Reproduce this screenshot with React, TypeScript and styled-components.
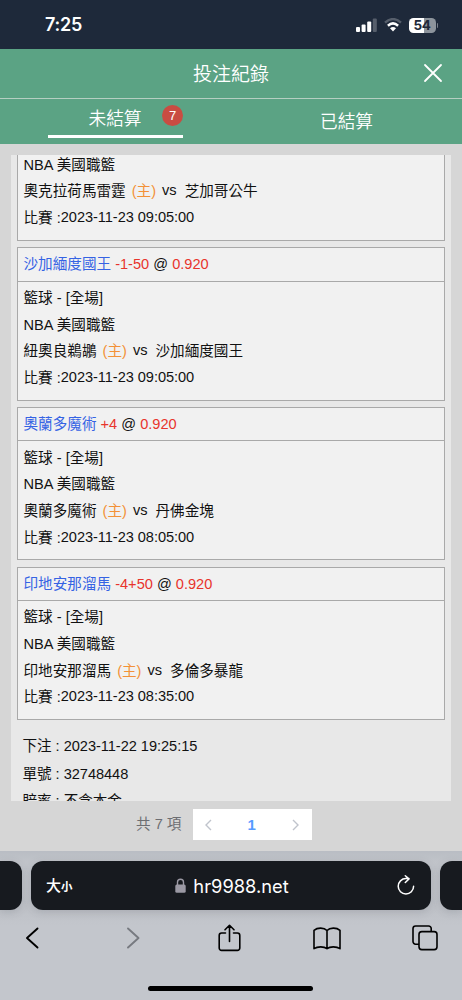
import React from 'react';
import styled, { createGlobalStyle } from 'styled-components';

const Global = createGlobalStyle`
  * { box-sizing: border-box; }
  body { margin: 0; background: #d6d6d6; }
`;

const Screen = styled.div`
  width: 462px;
  height: 1000px;
  overflow: hidden;
  display: flex;
  flex-direction: column;
  background: #d6d6d6;
  font-family: 'Liberation Sans', 'Noto Sans CJK TC', sans-serif;
  font-size: 14.6px;
  color: #111;
`;

const StatusBar = styled.div`
  flex: none;
  height: 49px;
  background: #1e293a;
  color: #fff;
  display: flex;
  align-items: center;
  justify-content: space-between;
  padding: 1px 24px 0 45px;
`;

const Clock = styled.span`
  font: 600 18px/22px Inter, sans-serif;
  letter-spacing: -0.2px;
`;

const StatusIcons = styled.div`
  display: flex;
  align-items: center;
  gap: 7px;
  svg { display: block; }
`;

const Battery = styled.div`
  display: flex;
  align-items: center;
  gap: 1px;
`;

const BatteryBody = styled.div`
  width: 27px;
  height: 15px;
  border-radius: 4.5px;
  background: linear-gradient(90deg, #fff 54%, #8d949c 54%);
  color: #1e293a;
  font: 700 13.5px/15px Inter, sans-serif;
  letter-spacing: -0.5px;
  text-align: center;
`;

const BatteryTip = styled.div`
  width: 1.5px;
  height: 5px;
  border-radius: 0 2px 2px 0;
  background: #7b828c;
`;

const Header = styled.div`
  flex: none;
  height: 50px;
  background: #5ba384;
  border-bottom: 1px solid #b5cfc2;
  display: grid;
  grid-template-columns: 60px 1fr 60px;
  align-items: center;
  color: #fff;
`;

const Title = styled.div`
  grid-column: 2;
  text-align: center;
  font-size: 19px;
  font-weight: 350;
  line-height: 28px;
  padding-top: 3px;
`;

const CloseButton = styled.button`
  border: 0;
  padding: 0 19px 2px 0;
  background: none;
  display: flex;
  justify-content: flex-end;
  color: #fff;
`;

const Tabs = styled.div`
  flex: none;
  height: 45px;
  display: flex;
  background: #5ba384;
  color: #fff;
  font-size: 17.7px;
  font-weight: 350;
`;

const Tab = styled.div`
  flex: 1;
  display: flex;
  justify-content: center;
  padding-top: 10px;
  line-height: 26px;
`;

const ActiveLabel = styled.div`
  position: relative;
  width: 135px;
  height: 39px;
  margin-top: -10px;
  padding: 7px 1px 0 0;
  border-bottom: 3px solid #fff;
  text-align: center;
`;

const Count = styled.span`
  position: absolute;
  right: 0;
  top: 6px;
  width: 21px;
  height: 21px;
  border-radius: 50%;
  background: #c94c42;
  font-size: 13px;
  font-weight: 400;
  line-height: 21px;
`;

const Panel = styled.main`
  flex: none;
  height: 646px;
  margin: 11px 11px 0;
  padding: 0 6px;
  background: #e8e8e8;
  overflow: hidden;
`;

const Card = styled.section<{ $cut?: boolean }>`
  height: ${p => (p.$cut ? '89.6px' : '153.4px')};
  margin-top: ${p => (p.$cut ? '-3.3px' : '6.2px')};
  border: 1px solid #a9a9a9;
  border-top-width: ${p => (p.$cut ? 0 : '1px')};
  background: #f1f1f1;
`;

const Pick = styled.div`
  height: 33.4px;
  line-height: 33.4px;
  padding-left: 5.5px;
  border-bottom: 1px solid #a9a9a9;
  margin-bottom: 3.4px;
  white-space: pre;
`;

const Tone = styled.span<{ $c: string }>`
  color: ${p => p.$c};
`;

const Host1 = styled(Tone)`
  margin-left: 2px;
`;

const Line = styled.div`
  display: flex;
  height: 26.6px;
  line-height: 27px;
  padding-left: 5.5px;
  white-space: pre;
`;

const Versus = styled.span`
  line-height: 24px;
  margin: 0 8px 0 6px;
`;

const Time = styled.span`
  line-height: 24px;
  letter-spacing: -0.06px;
`;

const Receipt = styled.div`
  padding: 13px 0 0 5.5px;
  letter-spacing: -0.04px;
`;

const ReceiptLine = styled.div`
  height: 27.6px;
  line-height: 26px;
  white-space: pre;
`;

const Pager = styled.div`
  flex: none;
  height: 50px;
  padding: 8px 0 0 136px;
  display: flex;
  gap: 12px;
  color: #6d6e72;
  line-height: 31px;
`;

const Total = styled.span`
  width: 45px;
  white-space: nowrap;
`;

const Pages = styled.div`
  width: 119px;
  height: 31px;
  background: #fff;
  display: flex;
  align-items: center;
  justify-content: space-between;
  padding: 0 13.5px 0 12px;
  color: #c0c4cc;
`;

const Current = styled.b`
  color: #569bff;
  font-size: 15px;
`;

const Browser = styled.footer`
  flex: 1;
  background: linear-gradient(#b9bdc4, #c1c4ca 12px, #bfc2c8 58px, #c3c6cc 75px);
  display: flex;
  flex-direction: column;
`;

const AddressRow = styled.div`
  height: 49px;
  margin-top: 10px;
  display: flex;
  gap: 9px;
`;

const SideTab = styled.div<{ $right?: boolean }>`
  width: 22px;
  background: #171a1f;
  border-radius: ${p => (p.$right ? '12px 0 0 12px' : '0 12px 12px 0')};
  box-shadow: 0 2px 8px rgba(60, 65, 80, 0.18);
`;

const Address = styled.div`
  width: 400px;
  border-radius: 12px;
  background: #171a1f;
  box-shadow: 0 2px 8px rgba(60, 65, 80, 0.18);
  color: #fff;
  display: grid;
  grid-template-columns: 100px 1fr 100px;
  align-items: center;
`;

const TextSize = styled.div`
  padding-left: 15px;
  font: 500 15px/24px 'Noto Sans CJK TC', sans-serif;
  small { font-size: 11.5px; font-weight: 700; }
`;

const Host = styled.div`
  display: flex;
  align-items: center;
  justify-content: center;
  gap: 7px;
  padding-left: 2px;
  font: 400 18.3px/24px Inter, sans-serif;
`;

const Reload = styled.div`
  display: flex;
  justify-content: flex-end;
  padding-right: 15px;
`;

const Toolbar = styled.div`
  display: flex;
  align-items: center;
  height: 56px;
  padding-left: 24px;
`;

const Tool = styled.div<{ $gap: number }>`
  margin-right: ${p => p.$gap}px;
  display: flex;
`;

const HomeBar = styled.div`
  width: 165px;
  height: 5px;
  border-radius: 3px;
  background: #000;
  margin: 20px 0 0 148px;
`;

const bets = [
  { pick: '沙加緬度國王', line: '-1-50', home: '紐奧良鵜鶘', away: '沙加緬度國王', time: '2023-11-23 09:05:00' },
  { pick: '奧蘭多魔術', line: '+4', home: '奧蘭多魔術', away: '丹佛金塊', time: '2023-11-23 08:05:00' },
  { pick: '印地安那溜馬', line: '-4+50', home: '印地安那溜馬', away: '多倫多暴龍', time: '2023-11-23 08:35:00' },
];

const Match = ({ home, away, time }: { home: string; away: string; time: string }) => (
  <>
    <Line>NBA 美國職籃</Line>
    <Line>
      {home} <Host1 $c="#f39138">(主)</Host1>
      <Versus>vs</Versus>
      {away}
    </Line>
    <Line>
      比賽 :<Time>{time}</Time>
    </Line>
  </>
);

export default function App() {
  return (
    <Screen>
      <Global />
      <StatusBar>
        <Clock>7:25</Clock>
        <StatusIcons>
          <svg width="21" height="14" viewBox="0 0 21 14" fill="#fff">
            <rect x="0" y="9" width="4" height="5" rx="1" />
            <rect x="5.6" y="6.6" width="4" height="7.4" rx="1" />
            <rect x="11.2" y="3.6" width="4" height="10.4" rx="1" />
            <rect x="16.8" y="0.4" width="4" height="13.6" rx="1" opacity=".25" />
          </svg>
          <svg width="18" height="14" viewBox="0 0 18 14" fill="none" stroke="#fff">
            <path d="M1 4.6Q9-2.4 17 4.6" strokeWidth="2.4" opacity=".25" />
            <path d="M3.9 7.7Q9 3.1 14.1 7.7" strokeWidth="2.5" />
            <path d="M6 10.3Q9 7.8 12 10.3L9 13.4Z" fill="#fff" stroke="none" />
          </svg>
          <Battery>
            <BatteryBody>54</BatteryBody>
            <BatteryTip />
          </Battery>
        </StatusIcons>
      </StatusBar>
      <Header>
        <Title>投注紀錄</Title>
        <CloseButton aria-label="close">
          <svg width="20" height="20" viewBox="0 0 20 20" stroke="currentColor" strokeWidth="1.8" strokeLinecap="round">
            <path d="M2 2L18 18M18 2L2 18" />
          </svg>
        </CloseButton>
      </Header>
      <Tabs>
        <Tab>
          <ActiveLabel>
            未結算<Count>7</Count>
          </ActiveLabel>
        </Tab>
        <Tab>已結算</Tab>
      </Tabs>
      <Panel>
        <Card $cut>
          <Match home="奧克拉荷馬雷霆" away="芝加哥公牛" time="2023-11-23 09:05:00" />
        </Card>
        {bets.map(b => (
          <Card key={b.pick}>
            <Pick>
              <Tone $c="#3563e4">{b.pick}</Tone> <Tone $c="#e8342c">{b.line}</Tone> @ <Tone $c="#e8342c">0.920</Tone>
            </Pick>
            <Line>籃球 - [全場]</Line>
            <Match home={b.home} away={b.away} time={b.time} />
          </Card>
        ))}
        <Receipt>
          <ReceiptLine>下注 : 2023-11-22 19:25:15</ReceiptLine>
          <ReceiptLine>單號 : 32748448</ReceiptLine>
          <ReceiptLine>賠率 : 不含本金</ReceiptLine>
        </Receipt>
      </Panel>
      <Pager>
        <Total>共 7 項</Total>
        <Pages>
          <svg width="7" height="12" viewBox="0 0 7 12" fill="none" stroke="currentColor" strokeWidth="1.4">
            <path d="M6 1L1 6L6 11" />
          </svg>
          <Current>1</Current>
          <svg width="7" height="12" viewBox="0 0 7 12" fill="none" stroke="currentColor" strokeWidth="1.4">
            <path d="M1 1L6 6L1 11" />
          </svg>
        </Pages>
      </Pager>
      <Browser>
        <AddressRow>
          <SideTab />
          <Address>
            <TextSize>大<small>小</small></TextSize>
            <Host>
              <svg width="11" height="15" viewBox="0 0 11 15">
                <path d="M2.5 7V4.3a3 3 0 0 1 6 0V7" fill="none" stroke="#9b99a4" strokeWidth="1.4" />
                <rect x="0.3" y="6.4" width="10.4" height="8.4" rx="1.5" fill="#9b99a4" />
              </svg>
              hr9988.net
            </Host>
            <Reload>
              <svg width="20" height="22" viewBox="0 0 20 22" fill="none" stroke="#fff" strokeWidth="1.5" strokeLinecap="round" strokeLinejoin="round">
                <path d="M17.6 11.300a7.7 7.7 0 1 1-7.7-7.7H13M9.3 .8L13 3.900L9.3 7.500" />
              </svg>
            </Reload>
          </Address>
          <SideTab $right />
        </AddressRow>
        <Toolbar>
          <Tool $gap={84.5}>
            <svg width="16" height="22" viewBox="0 0 16 22" fill="none" stroke="#000" strokeWidth="1.9" strokeLinecap="round" strokeLinejoin="round">
              <path d="M13.500 1.5L3 11L13.500 20.5" />
            </svg>
          </Tool>
          <Tool $gap={77}>
            <svg width="16" height="22" viewBox="0 0 16 22" fill="none" stroke="#777a80" strokeWidth="1.9" strokeLinecap="round" strokeLinejoin="round">
              <path d="M3 1.5L13.500 11L3 20.5" />
            </svg>
          </Tool>
          <Tool $gap={72}>
            <svg width="23" height="28" viewBox="0 0 23 28" fill="none" stroke="#000" strokeWidth="1.6" strokeLinecap="round" strokeLinejoin="round">
              <path d="M7.5 9H3.6A2.4 2.4 0 0 0 1.2 11.4V24A2.4 2.4 0 0 0 3.6 26.4H19.4A2.4 2.4 0 0 0 21.8 24V11.4A2.4 2.4 0 0 0 19.4 9H15.5M11.5 17.5V1.5M7 5.8L11.5 1.3L16 5.8" />
            </svg>
          </Tool>
          <Tool $gap={71}>
            <svg width="28" height="23" viewBox="0 0 28 23" fill="none" stroke="#000" strokeWidth="1.6" strokeLinejoin="round">
              <path d="M14 3.5C11 .4 4.5.4 1 3.3V21.7C4.5 19.3 11 19.3 14 21.7C17 19.3 23.5 19.3 27 21.7V3.3C23.5.4 17 .4 14 3.5V21.7" />
            </svg>
          </Tool>
          <Tool $gap={0}>
            <svg width="26" height="26" viewBox="0 0 26 26" fill="none" stroke="#000" strokeWidth="1.6">
              <path d="M7 19.2H3.6A2.6 2.6 0 0 1 1 16.6V3.6A2.6 2.6 0 0 1 3.6 1H16.6A2.6 2.6 0 0 1 19.2 3.6V6.6" />
              <rect x="7" y="6.6" width="18" height="18" rx="2.8" />
            </svg>
          </Tool>
        </Toolbar>
        <HomeBar />
      </Browser>
    </Screen>
  );
}
